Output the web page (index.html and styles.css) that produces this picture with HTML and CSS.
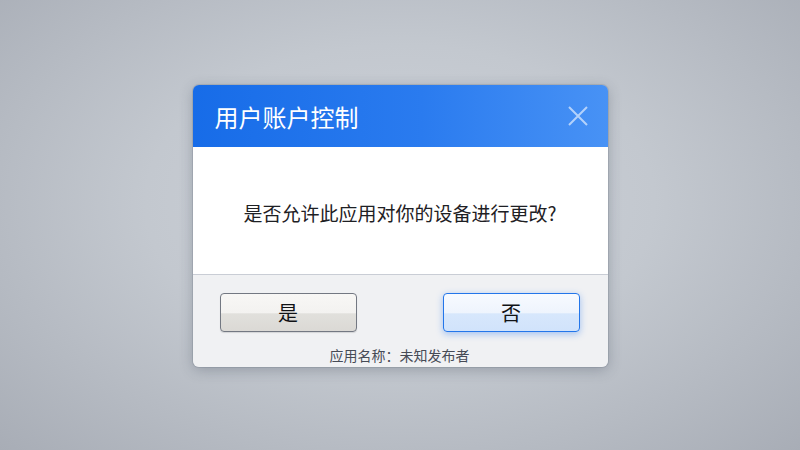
FILE: index.html
```html
<!DOCTYPE html>
<html lang="zh-CN">
<head>
    <meta charset="UTF-8">
    <title>用户账户控制</title>
    <link rel="stylesheet" href="styles.css">
</head>
<body>
    <div class="dialog">
        <div class="dialog-header">
            <h1>用户账户控制</h1>
            <span class="close">
                <svg width="20" height="20" viewBox="0 0 20 20">
                    <path d="M1 1 L19 19 M19 1 L1 19" stroke="currentColor" stroke-width="2" fill="none"/>
                </svg>
            </span>
        </div>
        <div class="dialog-body">
            <p>是否允许此应用对你的设备进行更改?</p>
        </div>
        <div class="dialog-footer">
            <div class="buttons">
                <button class="btn">是</button>
                <button class="btn btn-default">否</button>
            </div>
            <p class="app-name">应用名称：未知发布者</p>
        </div>
    </div>
</body>
</html>
```

FILE: styles.css
```css
* { padding: 0; margin: 0; box-sizing: border-box; }
body {
    background: radial-gradient(ellipse at 50% 45%, #ced2d9 0%, #c3c8cf 45%, #a8adb6 100%);
    font-family: "Noto Sans CJK SC", "Noto Sans", sans-serif;
    display: flex;
    justify-content: center;
    align-items: center;
    height: 100vh;
}
.dialog {
    width: 415px;
    border-radius: 6px;
    overflow: hidden;
    box-shadow: 0 3px 14px rgba(40, 50, 70, 0.28), 0 0 0 1px rgba(120, 130, 145, 0.25);
    margin-top: 2px;
}
.dialog-header {
    height: 62px;
    background: linear-gradient(90deg, #176ce8 0%, #2a7bef 55%, #4892f5 100%);
    display: flex;
    justify-content: space-between;
    align-items: center;
    padding: 0 20px 0 22px;
    color: #fff;
}
.dialog-header h1 {
    font-size: 24px;
    font-weight: 400;
    line-height: 1;
    margin-top: 1px;
}
.close {
    color: rgba(255, 255, 255, 0.6);
    display: flex;
}
.dialog-body {
    height: 128px;
    background: #fff;
    display: flex;
    justify-content: center;
    align-items: center;
    border-bottom: 1px solid #c9cdd5;
}
.dialog-body p {
    font-size: 19px;
    color: #1e2024;
    margin-top: 4px;
}
.dialog-footer {
    height: 92px;
    background: #f0f1f3;
    padding: 18px 28px 0 27px;
}
.buttons {
    display: flex;
    justify-content: space-between;
}
.btn {
    width: 137px;
    height: 39px;
    border: 1px solid #737882;
    border-radius: 4px;
    background: linear-gradient(180deg, #f8f7f5 0%, #f3f2f0 52%, #e1e0dc 53%, #dbd9d5 100%);
    font-family: inherit;
    font-size: 20px;
    color: #111316;
    box-shadow: 0 1px 1px rgba(0, 0, 0, 0.12);
}
.btn-default {
    border: 1.5px solid #2376ea;
    background: linear-gradient(180deg, #f7faff 0%, #eef4fd 52%, #d7e7fc 53%, #d1e3fb 100%);
    box-shadow: 0 2px 7px rgba(40, 120, 240, 0.4);
}
.app-name {
    text-align: center;
    font-size: 14px;
    color: #464b56;
    margin-top: 13px;
}
```
